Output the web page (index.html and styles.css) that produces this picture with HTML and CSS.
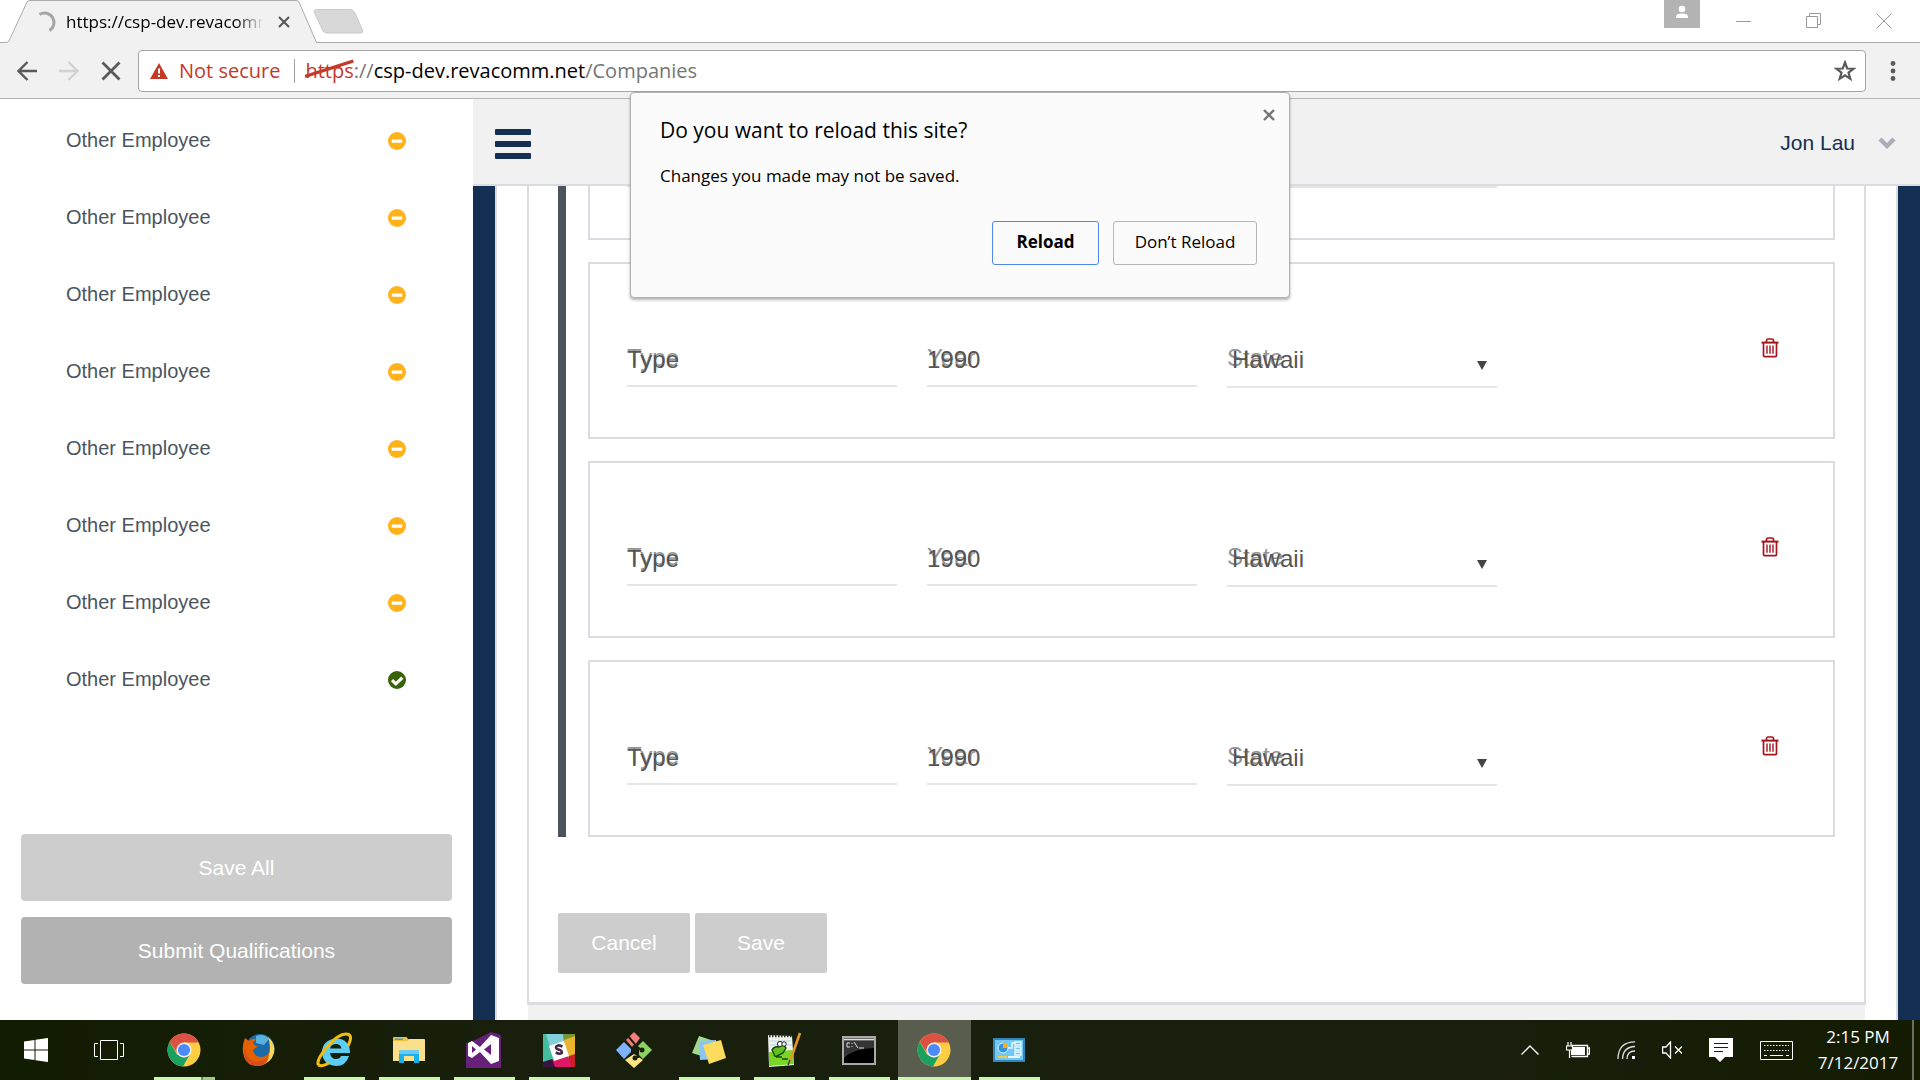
FILE: index.html
```html
<!DOCTYPE html>
<html lang="en">
<head>
<meta charset="utf-8">
<title>Companies</title>
<link rel="stylesheet" href="styles.css">
</head>
<body>
<svg class="sprite" aria-hidden="true">
  <symbol id="minus" viewBox="0 0 18 18"><circle cx="9" cy="9" r="9" fill="#ffb21a"/><rect x="3.7" y="7.5" width="10.6" height="3.2" rx=".6" fill="#fff"/></symbol>
  <symbol id="check" viewBox="0 0 18 18"><circle cx="9" cy="9" r="9" fill="#386308"/><path d="M4 9.2l3.8 3.6 6.6-6.2" fill="none" stroke="#fff" stroke-width="3.2" stroke-linejoin="round"/></symbol>
  <symbol id="trash" viewBox="0 0 18 20"><g fill="none" stroke="#a3151c"><path d="M0.5 4.6h17" stroke-width="2"/><path d="M5.5 4V2.4Q5.7 1 7 1h4q1.3 0 1.5 1.4V4M2.5 5v12.4q0 1.2 1.2 1.2h10.6q1.2 0 1.2-1.2V5" stroke-width="1.7"/><path d="M6 7.5v8.2M9 7.5v8.2M12 7.5v8.2" stroke-width="1.4"/></g></symbol>
  <symbol id="chrome" viewBox="0 0 34 34"><circle cx="17" cy="17" r="16.5" fill="#ffcd41"/><path d="M2.7 8.8A16.5 16.5 0 0 1 31.8 9.6H17L10.6 20.8z" fill="#dd5144"/><path d="M2.7 8.8A16.5 16.5 0 0 0 16 33.5l7-12.5-6 3.5-7-3z" fill="#1aa15f"/><circle cx="17" cy="17" r="7.6" fill="#f1f1f1"/><circle cx="17" cy="17" r="6.1" fill="#4c8bf5"/></symbol>
</svg>

<header class="browser">
  <div class="tabstrip">
    <div class="tab">
      <svg class="tab-shape" viewBox="0 0 320 43" aria-hidden="true"><path d="M0 42.5H7L9 41 27.500 2Q28 .5 30 .5H296Q298 .5 299 2L316.500 41L319 42.500V43H0z" fill="#f1f1f1"/><path d="M0 42.500H7L9 41 27 2Q28 .5 30 .5H296Q298 .5 299 2L316.500 42.500H320" fill="none" stroke="#ababab"/></svg>
      <div class="tab-body">
        <svg class="spinner" viewBox="0 0 22 22" aria-hidden="true"><path d="M5.500 3.500A9 9 0 1 1 15.500 19.500" fill="none" stroke="#a6a6a6" stroke-width="3"/></svg>
        <span class="tab-title">https://csp-dev.revacomm</span>
        <button class="icon-button" aria-label="Close tab"><svg width="12" height="12" viewBox="0 0 12 12"><path d="M1 1l10 10M11 1L1 11" stroke="#555" stroke-width="2"/></svg></button>
      </div>
    </div>
    <button class="icon-button new-tab" aria-label="New tab"><svg width="52" height="27" viewBox="0 0 52 27"><path d="M4 1.500H37Q40 1.500 41.500 4L49.500 22Q50.500 25 48 25H14Q11 25 10 23L1 4Q.5 1.500 4 1.500z" fill="#d8d8d8" stroke="#cacaca"/></svg></button>
    <div class="window-controls">
      <button class="icon-button profile" aria-label="Profile"><svg width="36" height="28" viewBox="0 0 36 28"><path d="M0 0h36v28H0z" fill="#b3b3b3"/><circle cx="18" cy="9" r="3.300" fill="#fff"/><path d="M12 18v-1.500q0-3 6-3t6 3V18z" fill="#fff"/></svg></button>
      <button class="icon-button" aria-label="Minimize"><svg width="16" height="16" viewBox="0 0 16 16"><path d="M0 8.500h15" stroke="#999"/></svg></button>
      <button class="icon-button" aria-label="Restore"><svg width="16" height="16" viewBox="0 0 16 16"><path d="M.5 3.500h11v11H.5zM3.500 3V.5h11v11H12" fill="none" stroke="#999"/></svg></button>
      <button class="icon-button" aria-label="Close"><svg width="16" height="16" viewBox="0 0 16 16"><path d="M.5.5l15 15M15.500.5l-15 15" stroke="#999"/></svg></button>
    </div>
  </div>
  <div class="toolbar">
    <div class="nav">
      <button class="icon-button" aria-label="Back"><svg width="20" height="20" viewBox="0 0 20 20"><path d="M20 10H2M10.500 1L1.500 10l9 9" fill="none" stroke="#5a5a5a" stroke-width="2.400"/></svg></button>
      <button class="icon-button" aria-label="Forward"><svg width="20" height="20" viewBox="0 0 20 20"><path d="M0 10h18M9.500 1l9 9-9 9" fill="none" stroke="#d2d2d2" stroke-width="2.400"/></svg></button>
      <button class="icon-button" aria-label="Stop"><svg width="20" height="20" viewBox="0 0 20 20"><path d="M1.500 1.500l17 17M18.500 1.500l-17 17" stroke="#5a5a5a" stroke-width="2.800"/></svg></button>
    </div>
    <div class="omnibox">
      <svg width="18" height="16" viewBox="0 0 18 16" aria-hidden="true"><path d="M9 0l9 16H0z" fill="#c53929"/><path d="M8 5.500h2v5H8zM8 12h2v2H8z" fill="#fff"/></svg>
      <span class="not-secure">Not secure</span>
      <div class="url" role="textbox" aria-label="Address" tabindex="0"><span class="scheme">https<svg class="strike" viewBox="0 0 48 20" preserveAspectRatio="none" aria-hidden="true"><path d="M0 17.500L48 2" stroke="#c53929" stroke-width="3.400"/></svg></span><span class="dim">://</span>csp-dev.revacomm.net<span class="dim">/Companies</span></div>
      <button class="icon-button" aria-label="Bookmark this page"><svg width="22" height="22" viewBox="0 0 22 22"><path d="M11 2.500l2.200 6 6.300.2-5 3.900 1.800 6.200L11 15.300l-5.300 3.500 1.800-6.200-5-3.900 6.300-.2z" fill="none" stroke="#5a5a5a" stroke-width="2.200"/></svg></button>
    </div>
    <button class="icon-button menu" aria-label="Menu"><svg width="6" height="20" viewBox="0 0 6 20"><g fill="#5a5a5a"><circle cx="3" cy="2.500" r="2.400"/><circle cx="3" cy="10" r="2.400"/><circle cx="3" cy="17.500" r="2.400"/></g></svg></button>
  </div>
</header>

<div class="app">
  <aside class="sidebar">
    <ul class="steps">
      <li><a href="#">Other Employee</a><svg class="status"><use href="#minus"/></svg></li>
      <li><a href="#">Other Employee</a><svg class="status"><use href="#minus"/></svg></li>
      <li><a href="#">Other Employee</a><svg class="status"><use href="#minus"/></svg></li>
      <li><a href="#">Other Employee</a><svg class="status"><use href="#minus"/></svg></li>
      <li><a href="#">Other Employee</a><svg class="status"><use href="#minus"/></svg></li>
      <li><a href="#">Other Employee</a><svg class="status"><use href="#minus"/></svg></li>
      <li><a href="#">Other Employee</a><svg class="status"><use href="#minus"/></svg></li>
      <li><a href="#">Other Employee</a><svg class="status"><use href="#check"/></svg></li>
    </ul>
    <div class="sidebar-actions">
      <button class="button">Save All</button>
      <button class="button button-dark">Submit Qualifications</button>
    </div>
  </aside>

  <div class="workspace">
    <div class="app-header">
      <button class="icon-button" aria-label="Toggle navigation"><svg width="36" height="30" viewBox="0 0 36 30"><g fill="#132f53"><rect width="36" height="6" rx="1"/><rect y="12" width="36" height="6" rx="1"/><rect y="24" width="36" height="6" rx="1"/></g></svg></button>
      <button class="icon-button user">Jon Lau<svg width="18" height="12" viewBox="0 0 18 12" aria-hidden="true"><path d="M2 2l7 7 7-7" fill="none" stroke="#acafb8" stroke-width="4.400"/></svg></button>
    </div>
    <main class="canvas">
      <div class="page">
        <section class="panel">
          <div class="records">
            <div class="record record-cut"><span class="line"></span><span class="line"></span><span class="line line-low"></span></div>

            <form class="record">
              <div class="field"><label for="type1">Type</label><input id="type1" value="Type"></div>
              <div class="field"><label for="year1">Year</label><input id="year1" value="1990"></div>
              <div class="field"><label for="state1">State</label><select id="state1"><option>Hawaii</option></select><svg class="caret" viewBox="0 0 10 9" aria-hidden="true"><path d="M0 0h10L5 9z"/></svg></div>
              <button type="button" class="icon-button remove" aria-label="Delete"><svg width="18" height="20"><use href="#trash"/></svg></button>
            </form>

            <form class="record">
              <div class="field"><label for="type2">Type</label><input id="type2" value="Type"></div>
              <div class="field"><label for="year2">Year</label><input id="year2" value="1990"></div>
              <div class="field"><label for="state2">State</label><select id="state2"><option>Hawaii</option></select><svg class="caret" viewBox="0 0 10 9" aria-hidden="true"><path d="M0 0h10L5 9z"/></svg></div>
              <button type="button" class="icon-button remove" aria-label="Delete"><svg width="18" height="20"><use href="#trash"/></svg></button>
            </form>

            <form class="record">
              <div class="field"><label for="type3">Type</label><input id="type3" value="Type"></div>
              <div class="field"><label for="year3">Year</label><input id="year3" value="1990"></div>
              <div class="field"><label for="state3">State</label><select id="state3"><option>Hawaii</option></select><svg class="caret" viewBox="0 0 10 9" aria-hidden="true"><path d="M0 0h10L5 9z"/></svg></div>
              <button type="button" class="icon-button remove" aria-label="Delete"><svg width="18" height="20"><use href="#trash"/></svg></button>
            </form>
          </div>
          <div class="panel-actions">
            <button class="button button-small">Cancel</button>
            <button class="button button-small">Save</button>
          </div>
        </section>
        <div class="next-panel"></div>
      </div>
    </main>
  </div>
</div>

<div class="dialog" role="dialog" aria-labelledby="dialog-title">
  <div class="dialog-head">
    <h1 id="dialog-title">Do you want to reload this site?</h1>
    <button class="icon-button" aria-label="Close dialog"><svg width="12" height="12" viewBox="0 0 12 12"><path d="M1 1l10 10M11 1L1 11" stroke="#757575" stroke-width="2.400"/></svg></button>
  </div>
  <p>Changes you made may not be saved.</p>
  <div class="dialog-actions">
    <button class="dialog-button primary">Reload</button>
    <button class="dialog-button">Don’t Reload</button>
  </div>
</div>

<footer class="taskbar">
  <button class="task" aria-label="Start"><svg width="24" height="24" viewBox="0 0 24 24"><path d="M0 3.500L10.500 2v9.500H0zM11.500 1.800L24 0v11.500H11.500zM0 12.500h10.500V22L0 20.500zM11.500 12.500H24V24l-12.500-1.800z" fill="#fff"/></svg></button>
  <button class="task" aria-label="Task view"><svg width="30" height="20" viewBox="0 0 30 20"><path d="M6.500.5h17v19h-17zM4 3.500H.5v13H4M26 3.500h3.500v13H26" fill="none" stroke="#fff"/></svg></button>
  <button class="task open grouped" aria-label="Chrome"><svg width="34" height="34"><use href="#chrome"/></svg></button>
  <button class="task" aria-label="Firefox"><svg width="34" height="34" viewBox="0 0 34 34"><circle cx="18" cy="15.500" r="14.500" fill="#1c6ba8"/><path d="M14 3q8-3 13 3l-5 6-8-2z" fill="#58b2dc"/><path d="M26 4q8 7 6 16-3 10-13 12 9-7 9-17 0-6-2-11z" fill="#f6d75c"/><path d="M3 5l4 3q3-3 7-2l-3 4q1 3 5 3l-5 4q1 7 8 7 6 0 8-5 1 13-10 14Q6 34 2 24-1 14 3 5z" fill="#e66000"/><path d="M3 13q0 12 9 15 8 2 13-4-1 9-9 9Q4 32 2 22z" fill="#d64d21"/></svg></button>
  <button class="task open" aria-label="Internet Explorer"><svg width="36" height="36" viewBox="0 0 36 36"><path d="M34 21H14q1 6 6 6 4 0 5-3h8q-3 10-13 10Q7 33 6 21 6 8 20 6.500 34 7 34 21zM14 16.500h11.500q-1-4.500-5.500-4.500-5 0-6 4.500z" fill="#5ccdf5"/><path d="M32 14Q38 2 30 2 22 2 11 15 1 27 2 32q2 4 11-1" fill="none" stroke="#f3bd0c" stroke-width="3"/></svg></button>
  <button class="task open" aria-label="File Explorer"><svg width="34" height="30" viewBox="0 0 34 30"><path d="M1 3q0-1 1-1h12q1 0 2 2h15v4H1z" fill="#f3bd3a"/><path d="M1 6h14l3-2h14q1 0 1 1v21H1z" fill="#fbe08c"/><path d="M3 3.500h8v1.500H3z" fill="#1cade4"/><path d="M7 15h20v13h-5v-7H12v7H7z" fill="#17b1ee"/><path d="M7 15h20v4H7z" fill="#6ccbf4"/></svg></button>
  <button class="task open" aria-label="Visual Studio"><svg width="36" height="36" viewBox="0 0 36 36"><path d="M0 11h3L25 0l10 3v33H0z" fill="#68217a"/><path fill-rule="evenodd" d="M2 11l4-2 8 6L25 3l8 3v23l-8 3-11-12-8 6-4-2zM25 12l-7 5.500 7 5.500zM6 14v7l4-3.500z" fill="#fff"/></svg></button>
  <button class="task open" aria-label="Slack"><svg width="32" height="33" viewBox="0 0 32 33"><path d="M0 0h32v33H0z" fill="#44bd9e"/><path d="M3 0h21l-2 8-15 5z" fill="#83d0dc"/><path d="M20 0h12v5l-11 4z" fill="#75962c"/><path d="M21 6l11-4v20l-6 2z" fill="#ecb32d"/><path d="M26 22l6-2v13h-6z" fill="#cc1f24"/><path d="M0 28l11-3 14-3 4 11H0z" fill="#e01765"/><path d="M0 28l9-3 3 8H0z" fill="#3a1440"/><path d="M6 12l15-5 5 15-15 5z" fill="#fff"/><path d="M19.500 12.500q-6-2.500-6.500.8 0 1.700 3.200 2.500t2.600 3.200q-2.400 1.800-6-.6" fill="none" stroke="#472a49" stroke-width="2.600"/></svg></button>
  <button class="task" aria-label="Git"><svg width="36" height="36" viewBox="0 0 36 36"><path d="M18 0l6 6-5 7-2 3-7-8z" fill="#f97b7b"/><path d="M8 10l7 7v3l-7 7-8-9z" fill="#80b3ff"/><path d="M27 9l9 9-9 9-5-5-1-7z" fill="#8cd35f"/><path d="M18 22l9 6-9 8-9-8z" fill="#ffe680"/><path d="M12 4l10 12v10M20 14l7 5" stroke="#181f0b" stroke-width="2" fill="none"/><g fill="#181f0b"><circle cx="19" cy="16" r="3"/><circle cx="26" cy="18" r="2.500"/><circle cx="19" cy="26" r="2.500"/></g></svg></button>
  <button class="task open" aria-label="Sticky Notes"><svg width="34" height="30" viewBox="0 0 34 30"><path d="M7 1l15 5-6 17-16-5z" fill="#a0d890"/><path d="M7 6l17-1 1 19-17 1z" fill="#8bc4f5"/><path d="M11 10l18-5 5 18-17 6z" fill="#fbdc5e"/></svg></button>
  <button class="task open" aria-label="Notepad++"><svg width="36" height="36" viewBox="0 0 36 36"><path d="M2 3l24 1 2 29-25 2z" fill="#eef3ec"/><path d="M3 20l24-2 1 14-25 2z" fill="#79d627"/><path d="M3 4h23" stroke="#333" stroke-width="2.500" stroke-dasharray="1.500 1.500"/><path d="M4 9h21M4 13h22" stroke="#b5d4e8"/><path d="M6 18q2-4 7-3l4-3 3 4-3 5-6 3q-3 1-3-2z" fill="#63be20" stroke="#1c4610" stroke-width="1.400"/><path d="M10 25h6M16 27h6" stroke="#1c4610" stroke-width="1.400"/><circle cx="14" cy="12" r="2.600" fill="#fff" stroke="#222"/><circle cx="18" cy="12" r="2.200" fill="#fff" stroke="#222"/><path d="M34 1L24 29" stroke="#e49625" stroke-width="2.600"/><path d="M24 28l-2 5" stroke="#444" stroke-width="1.600"/></svg></button>
  <button class="task open" aria-label="Command Prompt"><svg width="34" height="29" viewBox="0 0 34 29"><path d="M1 1h32v27H1z" fill="#000" stroke="#a9a9a9" stroke-width="2"/><path d="M2 3.500h30" stroke="#ddd" stroke-width="2"/><path d="M2 5h30v7Q12 12 2 22z" fill="#343434"/><path d="M8 7H5v4h3M10 7v1M10 10v1M12 6l4 6M17 12h5" fill="none" stroke="#ddd"/></svg></button>
  <button class="task open active" aria-label="Chrome window"><svg width="34" height="34"><use href="#chrome"/></svg></button>
  <button class="task open" aria-label="Control Panel"><svg width="32" height="24" viewBox="0 0 32 24"><path d="M1 1h30v22H1z" fill="#73c8f3" stroke="#2f87bd" stroke-width="2"/><circle cx="10" cy="10" r="5" fill="#3694d8" stroke="#d9f3ff"/><path d="M10 10V4a6 6 0 0 1 5 6z" fill="#f7a928"/><path d="M15 10h4V5h3M22 4h6v3h-6zM22 9h6v3h-6zM22 14h6v3h-6z" fill="none" stroke="#e5f7ff" stroke-width="1.500"/><path d="M5 19h9" stroke="#f0c94a" stroke-width="2"/><path d="M15 19h12" stroke="#e5f7ff" stroke-width="2"/></svg></button>

  <div class="tray">
    <svg width="18" height="10" viewBox="0 0 18 10"><path d="M.5 9.500L9 1l8.500 8.500" fill="none" stroke="#fff" stroke-width="1.400"/></svg>
    <svg width="24" height="16" viewBox="0 0 24 16"><path d="M5.500 3.500h16v11h-16M22 6h1.500v6H22" fill="none" stroke="#fff" stroke-width="1.400"/><path d="M7 5h12v8H5V9z" fill="#fff"/><path d="M.5 4h6v4h-6zM2 0v4M5 0v4M3.500 8v8" fill="none" stroke="#fff" stroke-width="1.200"/></svg>
    <svg width="18" height="18" viewBox="0 0 18 18"><g fill="none" stroke="#ddd" stroke-width="1.300"><path d="M1 18Q1 1 18 .8M5.500 18Q6 6 18 5.500M10 18q0-8 8-8"/></g><path d="M15 15h3v3h-3z" fill="#fff"/></svg>
    <svg width="20" height="18" viewBox="0 0 20 18"><path d="M.6 6v6H4l4.500 5V1L4 6zM13 5.500l7 7M20 5.500l-7 7" fill="none" stroke="#fff" stroke-width="1.300"/></svg>
    <svg width="24" height="24" viewBox="0 0 24 24"><path d="M0 0h24v19h-8l-5 5-5-5H0z" fill="#fff"/><path d="M5 5.500h14M5 9.500h14M5 13.500h9" stroke="#1a200c" stroke-width="1.200"/></svg>
    <svg width="33" height="19" viewBox="0 0 33 19"><path d="M.5.5h32v18H.5z" fill="none" stroke="#fff"/><path d="M4 4.500h25M4 9.500h25" stroke="#fff" stroke-dasharray="1.500 1.500"/><path d="M4 14.500h3M10 14.500h13M26 14.500h3" stroke="#fff"/></svg>
    <div class="clock"><span>2:15 PM</span><span>7/12/2017</span></div>
    <span class="show-desktop"></span>
  </div>
</footer>
</body>
</html>
```
FILE: styles.css
```css
* { box-sizing: border-box; }

body {
  margin: 0;
  min-height: 100vh;
  display: flex;
  flex-direction: column;
  position: relative;
  font-family: "Liberation Sans", Arial, sans-serif;
  background: #fff;
  overflow-x: hidden;
}

svg { display: block; flex: none; }
.sprite { position: absolute; width: 0; height: 0; }

button, input, select { font: inherit; color: inherit; }
button { cursor: pointer; }

.icon-button {
  display: flex;
  align-items: center;
  justify-content: center;
  padding: 0;
  border: 0;
  background: none;
}

/* Browser window */
.browser, .dialog, .taskbar { font-family: "Open Sans", "Noto Sans", sans-serif; }

.tabstrip {
  display: flex;
  height: 43px;
  background: #fff;
  border-bottom: 1px solid #ababab;
}
.tab { display: grid; width: 320px; height: 43px; flex: none; }
.tab > * { grid-area: 1 / 1; }
.tab-shape { width: 320px; height: 43px; }
.tab-body {
  display: flex;
  align-items: center;
  gap: 10px;
  padding: 0 30px 0 34px;
}
.spinner { width: 22px; height: 22px; }
.tab-title {
  width: 202px;
  overflow: hidden;
  white-space: nowrap;
  font-size: 17px;
  line-height: 24px;
  -webkit-mask-image: linear-gradient(90deg, #000 170px, transparent 198px);
  mask-image: linear-gradient(90deg, #000 170px, transparent 198px);
}
.new-tab { align-self: center; margin-left: -7px; }
.window-controls {
  display: flex;
  align-items: center;
  gap: 54px;
  margin-left: auto;
  padding-right: 28px;
}
.profile { align-self: flex-start; margin-right: -18px; }

.toolbar {
  display: flex;
  align-items: center;
  height: 56px;
  background: #f1f1f1;
  border-bottom: 1px solid #b4b4b4;
}
.nav { display: flex; gap: 22px; padding: 0 17px; }
.omnibox {
  flex: 1;
  display: flex;
  align-items: center;
  height: 42px;
  padding: 0 9px 0 11px;
  background: #fff;
  border: 1px solid #a6a6a6;
  border-radius: 4px;
  font-size: 20px;
  line-height: 28px;
}
.not-secure {
  color: #c53929;
  margin-left: 11px;
  padding-right: 14px;
  line-height: 24px;
  border-right: 1px solid #a0a0a0;
}
.url { flex: 1; padding-left: 10px; white-space: nowrap; }
.scheme { position: relative; color: #c53929; }
.strike { position: absolute; left: 0; top: 2px; width: 100%; height: 20px; }
.dim { color: #757575; }
.menu { width: 54px; }

/* Application */
.app { flex: 1; display: flex; }

.sidebar {
  flex: none;
  width: 473px;
  display: flex;
  flex-direction: column;
  justify-content: space-between;
  padding: 3px 21px 36px;
}
.steps { margin: 0; padding: 0 46px 0 45px; list-style: none; }
.steps li {
  display: flex;
  align-items: center;
  justify-content: space-between;
  height: 77px;
}
.steps a { color: #4a5560; font-size: 20px; text-decoration: none; }
.status { width: 18px; height: 18px; }
.sidebar-actions { display: grid; gap: 16px; }

.button {
  height: 67px;
  border: 0;
  border-radius: 4px;
  background: #cdcdcd;
  color: #fff;
  font-size: 21px;
}
.button-dark { background: #b2b2b2; }
.button-small { width: 132px; height: 60px; border-radius: 2px; }

.workspace { flex: 1; display: flex; flex-direction: column; min-width: 0; }
.app-header {
  display: flex;
  align-items: center;
  justify-content: space-between;
  height: 87px;
  padding: 4px 24px 0 22px;
  background: #f1f1f1;
  border-bottom: 2px solid #d9dde1;
}
.user { gap: 23px; padding-bottom: 2px; color: #132f53; font-size: 21px; }

.canvas { flex: 1; display: flex; padding: 0 22px; background: #132f53; }
.page {
  flex: 1;
  display: flex;
  flex-direction: column;
  padding: 0 30px;
  background: #fff;
  border: solid #dbdce1;
  border-width: 0 2px;
}
.panel {
  padding: 0 29px 29px;
  border: solid #dbdce1;
  border-width: 0 2px 3px;
}
.next-panel {
  flex: 1;
  margin: 0 1px;
  background: #f1f1f1;
}
.records {
  display: grid;
  gap: 22px;
  padding-left: 22px;
  border-left: 8px solid #4a545f;
}
.record {
  display: grid;
  grid-template-columns: repeat(3, minmax(0, 270px)) 1fr;
  column-gap: 30px;
  align-items: start;
  padding: 73px 37px 49px;
  border: 2px solid #dbdce1;
}
.record-cut { height: 54px; padding: 0 37px; border-top: 0; }
.line { height: 1px; background: #e5e5e5; }
.line-low { height: 2px; }

.field { display: grid; color: #555; font-size: 24px; }
.field > * { grid-area: 1 / 1; }
.field label { padding-top: 7px; line-height: 27px; color: #949494; }
.field input, .field select {
  width: 100%;
  height: 50px;
  padding: 0 0 2px;
  border: 0;
  border-bottom: 2px solid #e5e5e5;
  border-radius: 0;
  background: none;
  appearance: none;
}
.field select { height: 51px; padding: 0 0 4px 5px; }
.caret {
  width: 10px;
  height: 9px;
  align-self: center;
  justify-self: end;
  margin: 6px 10px 0 0;
  fill: #444;
}
.remove { justify-self: end; width: 52px; height: 22px; }

.panel-actions { display: flex; gap: 5px; padding-top: 76px; }

/* Reload prompt, floating over the page */
.dialog {
  position: absolute;
  top: 92px;
  left: 50%;
  width: 660px;
  margin-left: -330px;
  padding: 16px 32px 32px 29px;
  background: #fbfbfb;
  border: 1px solid #b0b0b0;
  border-radius: 4px;
  box-shadow: 0 2px 3px rgba(0, 0, 0, .3);
  color: #000;
}
.dialog-head { display: flex; justify-content: space-between; }
.dialog-head h1 { margin: 0; font-size: 21px; font-weight: 400; line-height: 42px; }
.dialog-head .icon-button { width: 12px; height: 12px; margin-right: -18px; }
.dialog p { margin: 0; padding-top: 12px; font-size: 17px; line-height: 26px; }
.dialog-actions { display: flex; justify-content: flex-end; gap: 14px; padding-top: 32px; }
.dialog-button {
  height: 44px;
  width: 144px;
  padding: 0 0 4px;
  background: #fafafa;
  border: 1px solid #b6b6b6;
  border-radius: 3px;
  font-size: 17px;
}
.dialog-button.primary { width: 107px; border-color: #4d87ea; font-weight: 700; }

/* Taskbar */
.taskbar {
  display: flex;
  height: 60px;
  background: linear-gradient(90deg, #121c02, #191f0d 30%, #191f0d 75%, #131c02);
}
.task {
  display: flex;
  align-items: center;
  justify-content: center;
  position: relative;
  width: 75px;
  padding: 0 2px 0 0;
  border: 0;
  background: none;
}
.task:first-child { width: 72px; padding: 0; }
.task.open::after {
  content: "";
  position: absolute;
  left: 7px;
  right: 7px;
  bottom: 0;
  height: 3px;
  background: #ccf5ae;
}
.task.grouped::after { background: linear-gradient(90deg, #ccf5ae 47px, #6f8a5c 47px 49px, #a3c78c 49px); }
.task.active { background: linear-gradient(#585d4e, #585d4e) center / 73px 100% no-repeat; }
.task.active::after { left: 1px; right: 1px; }

.tray {
  display: flex;
  align-items: center;
  gap: 27px;
  margin-left: auto;
  padding-right: 6px;
}
.clock {
  display: grid;
  width: 84px;
  margin-left: -4px;
  color: #fff;
  font-size: 17px;
  line-height: 26px;
  text-align: center;
}
.show-desktop { width: 2px; height: 60px; margin-left: -15px; background: #687060; }
```
